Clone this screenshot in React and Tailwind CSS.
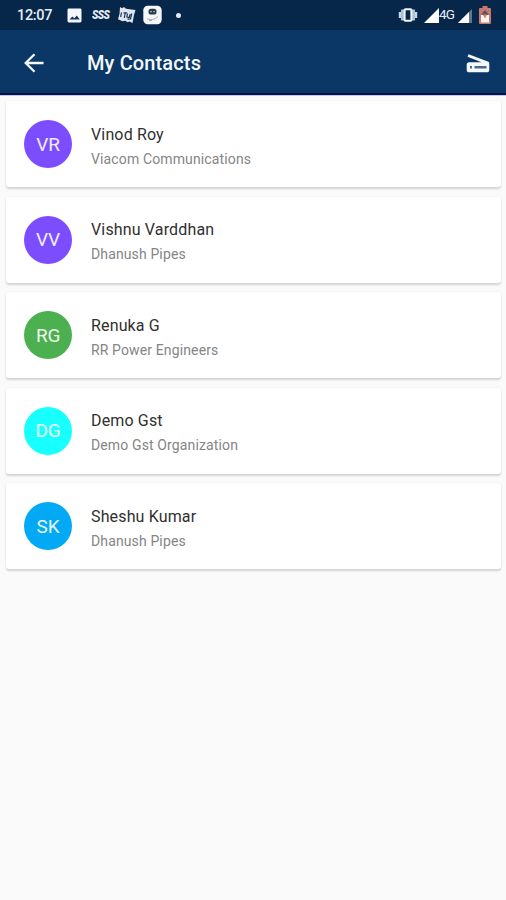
const contacts = [
  { initials: 'VR', name: 'Vinod Roy', company: 'Viacom Communications', color: 'bg-[#7c4dff]' },
  { initials: 'VV', name: 'Vishnu Varddhan', company: 'Dhanush Pipes', color: 'bg-[#7c4dff]' },
  { initials: 'RG', name: 'Renuka G', company: 'RR Power Engineers', color: 'bg-[#4caf50]' },
  { initials: 'DG', name: 'Demo Gst', company: 'Demo Gst Organization', color: 'bg-[#18ffff]' },
  { initials: 'SK', name: 'Sheshu Kumar', company: 'Dhanush Pipes', color: 'bg-[#03a9f4]' },
];

function StatusBar() {
  return (
    <div className="flex h-[30px] items-center bg-[#06264a] pl-[17px] pr-[15px] text-[#e6edf4]">
      <span className="w-[49.500px] whitespace-nowrap pt-[2px] text-[14.500px] font-medium leading-none tracking-[-0.35px]">12:07</span>
      <svg className="size-[15px]" viewBox="0 0 15 15">
        <rect x="0.5" y="0.5" width="14" height="14" rx="1.4" fill="#f4f7fa" />
        <path d="M2.500 11.500 5.300 8.500l2 1.700L9.800 7.500l3 4z" fill="#17365a" />
      </svg>
      <span className="ml-[10px] w-[25.500px] origin-left scale-x-[0.84] whitespace-nowrap text-[12.500px] font-black italic leading-none tracking-[-0.8px]">
        SSS
      </span>
      <svg className="h-[18px] w-[19px]" viewBox="0 0 19 18">
        <path d="M3 1 5 2.300 7 1l2 1.800 9.500 1.200-1.500 5L15.500 17l-3-1.500-2 .8-2-1.500-3 .5-4.500-2L2.500 8z" fill="#dfe6ee" />
        <path d="M4.500 6.500 3.600 11M6.500 6.800h3.500M8.200 7l-.9 5M10.500 7.500l-.6 3.500 2.400.5.900-3.500M14.800 7.500l-1.300 5.500-3 .2" fill="none" stroke="#17365a" strokeWidth="1.200" />
      </svg>
      <svg className="ml-[7px] h-[20px] w-[19px]" viewBox="0 0 19 20">
        <rect x="0.3" y="0.7" width="18.400" height="18.600" rx="4.500" fill="#f5f6f7" />
        <rect x="5.500" y="3.800" width="8" height="5.700" rx="2.600" fill="#293b4d" />
        <path d="M7.200 6.600h1.600M10.200 6.600h1.600" stroke="#a9b9c5" strokeWidth="1.200" />
        <path d="M4 13.500c3 2 7.500 1.500 11-2M6 15.500h3" fill="none" stroke="#a5aaad" strokeWidth="1" />
      </svg>
      <span className="ml-[14px] size-[5px] rounded-full bg-[#e4ebf2]" />
      <div className="ml-auto flex items-center">
        <svg className="h-[16px] w-[20px]" viewBox="0 0 20 16">
          <path d="M4.500 2.500v11M15.500 2.500v11" stroke="#a9bfd3" strokeWidth="3" />
          <path d="M1.900 5v6M18.100 5v6" stroke="#c8d7e5" strokeWidth="2.200" />
          <rect x="6.600" y="2.200" width="6.800" height="11.600" rx="0.800" fill="#06264a" stroke="#f3f6f9" strokeWidth="2" />
        </svg>
        <svg className="ml-[6px] h-[15px] w-[15px]" viewBox="0 0 15 15">
          <path d="M0 15 15 0v15z" fill="#fff" />
        </svg>
        <span className="w-[17.500px] whitespace-nowrap text-[13.500px] leading-none tracking-[-0.9px]">4G</span>
        <svg className="ml-px h-[15px] w-[15px]" viewBox="0 0 15 15">
          <path d="M0 15 14 1v14z" fill="#60788f" />
          <path d="M0 15 11 4v11z" fill="#fff" />
        </svg>
        <svg className="ml-[6.500px] h-[18px] w-[12px]" viewBox="0 0 12 18">
          <path d="M3.500 0h5v2H11a1 1 0 0 1 1 1v14a1 1 0 0 1-1 1H1a1 1 0 0 1-1-1V3a1 1 0 0 1 1-1h2.500z" fill="#c57a70" />
          <path d="M2 8.500h8v8H2z" fill="#fff4ef" />
          <path d="M6 4 10 9H2z" fill="#5f505e" />
          <path d="M3.800 8.500h4.400L6 12.500z" fill="#e47b66" />
        </svg>
      </div>
    </div>
  );
}

function AppBar() {
  return (
    <header className="flex h-[66px] items-center border-b border-[#c9c8ec] bg-[#0a3766] pl-[24px] pr-[16px] text-[#f4f7fb] shadow-[inset_0_-2px_0_#03104c]">
      <svg className="size-[20px]" viewBox="0 0 20 20" fill="none" stroke="currentColor" strokeWidth="2.300">
        <path d="M19.500 10H2M10.500 1.200 1.700 10l8.800 8.800" />
      </svg>
      <h1 className="ml-[43px] whitespace-nowrap pt-px text-[20px] font-medium leading-none tracking-[0.13px]">My Contacts</h1>
      <svg className="ml-auto h-[20px] w-[24px]" viewBox="0 0 24 20">
        <path
          fill="currentColor"
          d="M2.600 1.200 21.800 8.500c1 .4 1.500 1.200 1.500 2.200v6.300c0 1.400-1 2.300-2.300 2.300H3c-1.300 0-2.300-.9-2.300-2.300v-5.400C.7 10.200 1.700 9.200 3 9.200h12.500L1.500 3.800z"
        />
        <path d="M4 13h2v2.400H4zM8.500 13h12v2.400h-12z" fill="#4b6a8b" />
      </svg>
    </header>
  );
}

function ContactCard({ contact }) {
  return (
    <li className="flex h-[86px] items-center rounded-[3px] bg-white pl-[18px] shadow-[0_1.500px_2px_rgba(0,0,0,0.15),0_0_2px_rgba(0,0,0,0.04)]">
      <div className={`flex size-[48px] shrink-0 items-center justify-center rounded-full text-[19px] leading-none tracking-[-0.2px] text-white/90 ${contact.color}`}>
        {contact.initials}
      </div>
      <div className="ml-[19px] whitespace-nowrap pt-[5px]">
        <p className="text-[16px] leading-[24px] tracking-[0.15px] text-[#303030]">{contact.name}</p>
        <p className="text-[14px] leading-[24px] tracking-[0.13px] text-[#858585]">{contact.company}</p>
      </div>
    </li>
  );
}

export default function App() {
  return (
    <div className="flex h-[900px] w-[506px] flex-col overflow-hidden bg-[#fafafa] font-['Roboto',sans-serif]">
      <StatusBar />
      <AppBar />
      <ul className="flex flex-col gap-[9.600px] pl-[6px] pr-[5px] pt-[5px]">
        {contacts.map((contact) => (
          <ContactCard key={contact.initials} contact={contact} />
        ))}
      </ul>
    </div>
  );
}
